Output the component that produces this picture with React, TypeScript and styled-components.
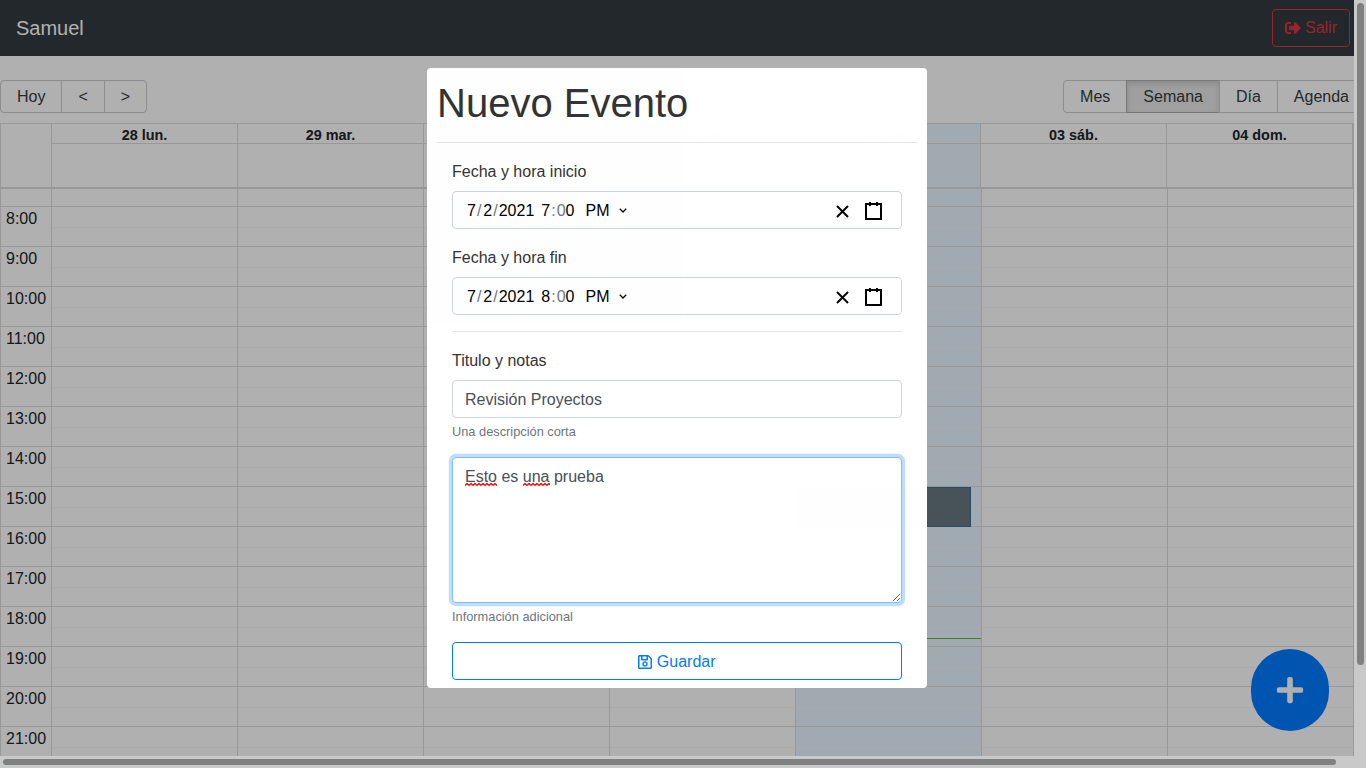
import React from 'react';
import styled, { createGlobalStyle } from 'styled-components';
import { FaPlus, FaRegSave, FaSignOutAlt } from 'react-icons/fa';

const GlobalStyle = createGlobalStyle`
  html, body {
    margin: 0;
    height: 100%;
    overflow: hidden;
  }

  * {
    box-sizing: border-box;
  }

  body {
    font-family: 'Liberation Sans', Arial, sans-serif;
    font-size: 16px;
    line-height: 1.5;
    color: #212529;
    background: #fff;
  }
`;

// browser window: page plus the two scrollbars
const Viewport = styled.div`
  display: grid;
  grid-template-columns: 1354px 12px;
  grid-template-rows: 756px 12px;
  width: 1366px;
  height: 768px;
  background: #c9c9c9;
`;

const Main = styled.main`
  position: relative;
  overflow: hidden;
  background: #fff;
`;

const VerticalTrack = styled.div`
  padding: 3px 2px 91px 3px;
`;

const HorizontalTrack = styled.div`
  grid-column: 1 / span 2;
  padding: 3px 30px 3px 3px;
`;

const Thumb = styled.div`
  width: 100%;
  height: 100%;
  border-radius: 4px;
  background: #7f8080;
`;

const Page = styled.div`
  width: 1366px;
`;

const Navbar = styled.nav`
  display: flex;
  align-items: center;
  justify-content: space-between;
  height: 56px;
  padding: 0 16px;
  background: #343a40;
`;

const Brand = styled.span`
  font-size: 20px;
  color: #fff;
`;

const LogoutButton = styled.button`
  display: flex;
  align-items: center;
  gap: 4px;
  height: 38px;
  padding: 0 12px;
  font: inherit;
  color: #dc3545;
  background: transparent;
  border: 1px solid #dc3545;
  border-radius: 4px;
`;

const Toolbar = styled.div`
  display: flex;
  justify-content: space-between;
  margin: 24px 0 10px;
`;

const ButtonGroup = styled.div`
  display: flex;
`;

const ToolButton = styled.button<{ $active?: boolean }>`
  height: 33px;
  padding: 0 16px;
  margin-left: -1px;
  font: inherit;
  line-height: 1;
  color: #373a3c;
  background: ${(p) => (p.$active ? '#e6e6e6' : 'transparent')};
  border: 1px solid ${(p) => (p.$active ? '#adadad' : '#ccc')};
  box-shadow: ${(p) => (p.$active ? 'inset 0 3px 5px rgba(0, 0, 0, 0.125)' : 'none')};

  &:first-child {
    margin-left: 0;
    border-radius: 4px 0 0 4px;
  }

  &:last-child {
    border-radius: 0 4px 4px 0;
  }
`;

const Calendar = styled.section`
  width: 1354px;
  border: 1px solid #ddd;
  border-bottom: 0;
`;

const HeaderGrid = styled.div`
  display: grid;
  grid-template-columns: 51px repeat(4, 186px) 185px 186px 186px;
  height: 65px;
  border-bottom: 2px solid #ddd;
`;

const HeaderGutter = styled.div`
  border-right: 1px solid #ddd;
`;

const HeaderColumn = styled.div<{ $today?: boolean }>`
  display: flex;
  flex-direction: column;
  background: ${(p) => (p.$today ? '#eaf6ff' : 'transparent')};
  border-right: 1px solid #ddd;
`;

const DayName = styled.div`
  height: 20px;
  font-size: 14.4px;
  font-weight: 700;
  line-height: 23px;
  text-align: center;
  color: #212529;
  border-bottom: 1px solid #ddd;
`;

const BodyGrid = styled.div`
  display: grid;
  grid-template-columns: 51px repeat(7, 186px);
`;

const Column = styled.div<{ $today?: boolean }>`
  position: relative;
  background: ${(p) => (p.$today ? '#eaf6ff' : 'transparent')};
  border-right: 1px solid #ddd;
`;

const PartialHour = styled.div`
  height: 18px;
  border-bottom: 1px solid #ddd;
`;

const Hour = styled.div`
  height: 40px;
  border-bottom: 1px solid #ddd;
`;

const HalfSlot = styled.div`
  height: 20px;

  & + & {
    border-top: 1px solid #f7f7f7;
  }
`;

const TimeLabel = styled.div`
  height: 40px;
  padding: 0 5px;
  line-height: 24px;
  color: #212529;
  border-bottom: 1px solid #ddd;
`;

const CalendarEvent = styled.div`
  position: absolute;
  top: 298px;
  left: 0;
  right: 10px;
  height: 40px;
  background: #677882;
  border: 1px solid #3a6f9c;
`;

const TimeIndicator = styled.div`
  position: absolute;
  top: 449px;
  left: 0;
  right: 0;
  height: 1px;
  background: #74ad31;
`;

const Fab = styled.button`
  position: absolute;
  left: 1251px;
  top: 649px;
  display: flex;
  align-items: center;
  justify-content: center;
  width: 78px;
  height: 82px;
  padding: 0;
  color: #fff;
  font-size: 30px;
  background: #007bff;
  border: 0;
  border-radius: 100px;
`;

const Overlay = styled.div`
  position: absolute;
  inset: 0;
  display: flex;
  align-items: center;
  justify-content: center;
  background: rgba(0, 0, 0, 0.31);
`;

// own layer, the text in the dialog is not subpixel antialiased
const Modal = styled.div`
  width: 500px;
  height: 620px;
  padding: 10px;
  overflow: hidden;
  color: #333;
  background: #fff;
  border-radius: 4px;
  will-change: opacity;
  opacity: 0.999;
`;

const Title = styled.h1`
  height: 48px;
  margin: 0;
  font-size: 40px;
  font-weight: 500;
  line-height: 50px;
`;

const Rule = styled.hr`
  margin: 16px 0;
  border: 0;
  border-top: 1px solid rgba(0, 0, 0, 0.1);
`;

const Form = styled.form`
  padding: 0 15px;
`;

const FormGroup = styled.div`
  margin-bottom: 16px;
`;

const Label = styled.label`
  display: block;
  height: 24px;
  margin-bottom: 8px;
  line-height: 26px;
`;

const DateField = styled.div`
  display: flex;
  align-items: center;
  height: 38px;
  padding: 0 12px 0 14px;
  color: #000;
  background: #fff;
  border: 1px solid #ced4da;
  border-radius: 4px;
`;

const DateParts = styled.div`
  display: flex;
  align-items: center;
  flex: 1;
  padding-top: 2px;
`;

const Part = styled.span<{ $muted?: boolean; $gap?: number }>`
  margin-left: ${(p) => p.$gap ?? 0}px;
  color: ${(p) => (p.$muted ? '#6d7680' : '#000')};
`;

const Chevron = styled.svg`
  margin: -2px 0 0 10px;
`;

const IconButton = styled.button`
  display: flex;
  width: 31px;
  height: 27px;
  padding: 4px 6px;
  margin-top: 2px;
  background: transparent;
  border: 0;
`;

const TextInput = styled.input`
  display: block;
  width: 100%;
  height: 38px;
  padding: 8px 12px 6px;
  font: inherit;
  color: #495057;
  background: #fff;
  border: 1px solid #ced4da;
  border-radius: 4px;
  outline: none;
`;

const Hint = styled.small`
  display: block;
  margin-top: 4px;
  font-size: 12.8px;
  color: #6c757d;
`;

const NotesBox = styled.div`
  height: 146px;
  padding: 7px 12px 5px;
  overflow: auto;
  resize: vertical;
  color: #495057;
  background: #fff;
  border: 1px solid #80bdff;
  border-radius: 4px;
  box-shadow: 0 0 0 3.2px rgba(0, 123, 255, 0.25);
`;

// spell checker squiggle under a word
const Misspelled = styled.span`
  padding-bottom: 1px;
  background: url("data:image/svg+xml,%3Csvg xmlns='http://www.w3.org/2000/svg' width='4' height='3'%3E%3Cpath d='M0 2.5L2 .5L4 2.5' fill='none' stroke='%23f00' stroke-width='1.4'/%3E%3C/svg%3E")
    repeat-x left bottom;
`;

const SaveButton = styled.button`
  display: flex;
  align-items: center;
  justify-content: center;
  gap: 4.45px;
  width: 100%;
  height: 38px;
  padding-top: 2px;
  font: inherit;
  color: #007bff;
  background: transparent;
  border: 1px solid #007bff;
  border-radius: 4px;
`;

const SaveIcon = styled(FaRegSave)`
  width: 14px;
  height: 16px;
`;

const HEADER_DAYS = ['28 lun.', '29 mar.', '30 mié.', '01 jue.', '02 vie.', '03 sáb.', '04 dom.'];
const HOURS = [8, 9, 10, 11, 12, 13, 14, 15, 16, 17, 18, 19, 20, 21];
const TODAY_INDEX = 4;

const DateTimeValue = ({ hour }: { hour: number }) => (
  <DateField>
    <DateParts>
      <Part>7</Part>
      <Part $muted $gap={1}>/</Part>
      <Part $gap={2}>2</Part>
      <Part $muted $gap={1}>/</Part>
      <Part $gap={1}>2021</Part>
      <Part $gap={7}>{hour}</Part>
      <Part $muted $gap={1}>:</Part>
      <Part $muted $gap={1}>0</Part>
      <Part>0</Part>
      <Part $gap={11}>PM</Part>
      <Chevron width="8" height="5" viewBox="0 0 8 5" fill="none" stroke="#000" strokeWidth="1.3">
        <polyline points="0.8,0.8 4,4 7.2,0.8" />
      </Chevron>
    </DateParts>
    <IconButton type="button" aria-label="Borrar">
      <svg width="19" height="19" viewBox="0 0 19 19" stroke="#000" strokeWidth="2">
        <line x1="4" x2="15" y1="4" y2="15" />
        <line x1="15" x2="4" y1="4" y2="15" />
      </svg>
    </IconButton>
    <IconButton type="button" aria-label="Calendario">
      <svg width="19" height="19" viewBox="0 0 19 19" stroke="#000" strokeWidth="2">
        <rect fill="none" width="15" height="15" x="2" y="2" />
        <line x1="6" x2="6" y1="0" y2="4" />
        <line x1="13" x2="13" y1="0" y2="4" />
      </svg>
    </IconButton>
  </DateField>
);

const HourSlots = () => (
  <Hour>
    <HalfSlot />
    <HalfSlot />
  </Hour>
);

const App = () => {
  return (
    <Viewport>
      <GlobalStyle />
      <Main>
        <Page>
          <Navbar>
            <Brand>Samuel</Brand>
            <LogoutButton type="button">
              <FaSignOutAlt size={16} />
              Salir
            </LogoutButton>
          </Navbar>

          <Toolbar>
            <ButtonGroup>
              <ToolButton>Hoy</ToolButton>
              <ToolButton>&lt;</ToolButton>
              <ToolButton>&gt;</ToolButton>
            </ButtonGroup>
            <ButtonGroup>
              <ToolButton>Mes</ToolButton>
              <ToolButton $active>Semana</ToolButton>
              <ToolButton>Día</ToolButton>
              <ToolButton>Agenda</ToolButton>
            </ButtonGroup>
          </Toolbar>

          <Calendar>
            <HeaderGrid>
              <HeaderGutter />
              {HEADER_DAYS.map((day, i) => (
                <HeaderColumn key={day} $today={i === TODAY_INDEX}>
                  <DayName>{day}</DayName>
                </HeaderColumn>
              ))}
            </HeaderGrid>
            <BodyGrid>
              <Column>
                <PartialHour />
                {HOURS.map((hour) => (
                  <TimeLabel key={hour}>{hour}:00</TimeLabel>
                ))}
              </Column>
              {HEADER_DAYS.map((day, i) => (
                <Column key={day} $today={i === TODAY_INDEX}>
                  <PartialHour />
                  {HOURS.map((hour) => (
                    <HourSlots key={hour} />
                  ))}
                  {i === TODAY_INDEX && (
                    <>
                      <CalendarEvent />
                      <TimeIndicator />
                    </>
                  )}
                </Column>
              ))}
            </BodyGrid>
          </Calendar>

          <Fab type="button" aria-label="Nuevo evento">
            <FaPlus />
          </Fab>
        </Page>

        <Overlay>
          <Modal>
            <Title>Nuevo Evento</Title>
            <Rule />
            <Form>
              <FormGroup>
                <Label>Fecha y hora inicio</Label>
                <DateTimeValue hour={7} />
              </FormGroup>
              <FormGroup>
                <Label>Fecha y hora fin</Label>
                <DateTimeValue hour={8} />
              </FormGroup>
              <Rule />
              <FormGroup>
                <Label>Titulo y notas</Label>
                <TextInput type="text" defaultValue="Revisión Proyectos" />
                <Hint>Una descripción corta</Hint>
              </FormGroup>
              <FormGroup>
                <NotesBox>
                  <Misspelled>Esto</Misspelled> es <Misspelled>una</Misspelled> prueba
                </NotesBox>
                <Hint>Información adicional</Hint>
              </FormGroup>
              <SaveButton type="button">
                <SaveIcon />
                Guardar
              </SaveButton>
            </Form>
          </Modal>
        </Overlay>
      </Main>

      <VerticalTrack>
        <Thumb />
      </VerticalTrack>
      <HorizontalTrack>
        <Thumb />
      </HorizontalTrack>
    </Viewport>
  );
};

export default App;
